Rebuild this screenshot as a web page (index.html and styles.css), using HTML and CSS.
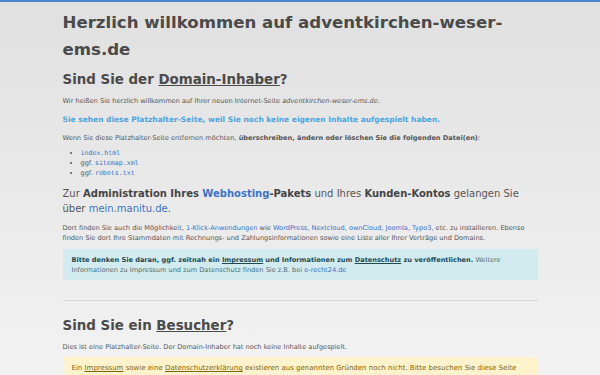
FILE: index.html
```html
<!DOCTYPE html>
<html lang="de">
<head>
    <meta charset="UTF-8">
    <meta name="viewport" content="width=device-width, initial-scale=1.0">
    <title>adventkirchen-weser-ems.de</title>
    <link rel="stylesheet" href="styles.css">
</head>
<body>
    <div class="container">
        <h1>Herzlich willkommen auf adventkirchen-weser-ems.de</h1>

        <h2>Sind Sie der <u>Domain-Inhaber</u>?</h2>
        <p>Wir heißen Sie herzlich willkommen auf Ihrer neuen Internet-Seite <em>adventkirchen-weser-ems.de</em>.</p>
        <p class="notice">Sie sehen diese Platzhalter-Seite, weil Sie noch keine eigenen Inhalte aufgespielt haben.</p>
        <p class="before-list">Wenn Sie diese Platzhalter-Seite entfernen möchten, <strong>überschreiben, ändern oder löschen Sie die folgenden Datei(en)</strong>:</p>
        <ul class="files">
            <li><code>index.html</code></li>
            <li>ggf. <code>sitemap.xml</code></li>
            <li>ggf. <code>robots.txt</code></li>
        </ul>

        <p class="lead">Zur <strong>Administration Ihres <a href="#">Webhosting</a>-Pakets</strong> und Ihres <strong>Kunden-Kontos</strong> gelangen Sie über <a href="#">mein.manitu.de</a>.</p>
        <p class="before-alert">Dort finden Sie auch die Möglichkeit, <a href="#">1-Klick-Anwendungen</a> wie <a href="#">WordPress</a>, <a href="#">Nextcloud</a>, <a href="#">ownCloud</a>, <a href="#">Joomla</a>, <a href="#">Typo3</a>, etc. zu installieren. Ebenso finden Sie dort Ihre Stammdaten mit Rechnungs- und Zahlungsinformationen sowie eine Liste aller Ihrer Verträge und Domains.</p>

        <div class="alert alert-info">
            <strong>Bitte denken Sie daran, ggf. zeitnah ein <u>Impressum</u> und Informationen zum <u>Datenschutz</u> zu veröffentlichen.</strong> Weitere Informationen zu Impressum und zum Datenschutz finden Sie z.B. bei <a href="#">e-recht24.de</a>
        </div>

        <hr>

        <h2>Sind Sie ein <u>Besucher</u>?</h2>
        <p class="before-alert visitor">Dies ist eine Platzhalter-Seite. Der Domain-Inhaber hat noch keine Inhalte aufgespielt.</p>

        <div class="alert alert-warning">
            Ein <u>Impressum</u> sowie eine <u>Datenschutzerklärung</u> existieren aus genannten Gründen noch nicht. Bitte besuchen Sie diese Seite später noch einmal.
        </div>
    </div>
</body>
</html>
```

FILE: styles.css
```css
:root {
    --text-color: #555;
    --heading-color: #4a4a4a;
    --link-color: #3b72c8;
    --notice-color: #4aa3df;
}

body {
    margin: 0;
    border-top: 2px solid #4a86d4;
    font-family: 'DejaVu Sans', Verdana, sans-serif;
    font-size: 6.6px;
    line-height: 10px;
    color: var(--text-color);
    background: linear-gradient(to bottom, #e0e0e0 0%, #f3f3f3 100%);
    min-height: 100vh;
}

.container {
    width: 475px;
    margin: 0 auto;
}

h1 {
    color: var(--heading-color);
    font-size: 16.6px;
    line-height: 27px;
    margin: 7px 0 0;
}

h2 {
    color: var(--heading-color);
    font-size: 13.4px;
    line-height: 20px;
    margin: 7px 0 6px;
}

p {
    margin: 0 0 9px;
}

a {
    color: var(--link-color);
    text-decoration: none;
}

.notice {
    color: var(--notice-color);
    font-weight: bold;
    font-size: 7.5px;
    margin-bottom: 8px;
}

.before-list {
    margin-bottom: 5px;
}

.files {
    margin: 0 0 8px;
    padding-left: 18px;
}

code {
    font-family: 'DejaVu Sans Mono', monospace;
    color: var(--link-color);
    font-size: 6.6px;
}

.lead {
    font-size: 10px;
    line-height: 15px;
    margin-bottom: 7px;
}

.lead strong {
    color: #444;
}

.before-alert {
    margin-bottom: 6px;
}

.visitor {
    margin-bottom: 5px;
}

.alert {
    padding: 6px 9px 5px;
}

.alert-info {
    background: #d1ebef;
    color: #4e6b72;
}

.alert-info strong {
    color: #1f4a54;
}

.alert-warning {
    background: #fff3cd;
    color: #856404;
    font-size: 7px;
}

hr {
    border: 0;
    border-top: 1px solid #d6d6d6;
    margin: 20px 0 0;
}

hr + h2 {
    margin-top: 15px;
}
```
